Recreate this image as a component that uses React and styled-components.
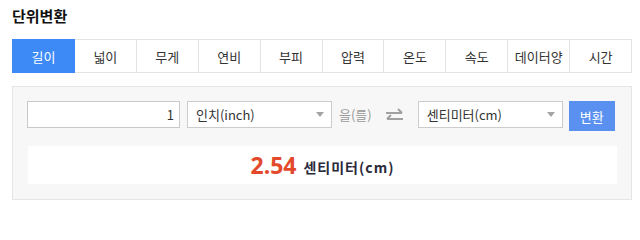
import React from "react";
import styled, { createGlobalStyle } from "styled-components";

const GlobalStyle = createGlobalStyle`
  body {
    margin: 0;
    background: #fff;
    font-family: "Noto Sans CJK KR", "Noto Sans", sans-serif;
    color: #333;
  }
`;

const Wrapper = styled.div`
  width: 620px;
  padding: 5px 8px 0 12px;
`;

const Title = styled.h2`
  margin: 0 0 12px;
  font-size: 15px;
  line-height: 22px;
  font-weight: 700;
  color: #111;
`;

const Tabs = styled.ul`
  display: flex;
  margin: 0 0 13px;
  padding: 0;
  list-style: none;
`;

const Tab = styled.li`
  flex: 1;
  height: 32px;
  display: flex;
  align-items: center;
  justify-content: center;
  font-size: 13px;
  border: 1px solid ${(p) => (p.$active ? "#3d8af7" : "#e3e3e3")};
  margin-left: -1px;
  background: ${(p) => (p.$active ? "#3d8af7" : "#fff")};
  color: ${(p) => (p.$active ? "#fff" : "#333")};
  position: relative;
  z-index: ${(p) => (p.$active ? 1 : 0)};
  &:first-child {
    margin-left: 0;
  }
`;

const Panel = styled.div`
  border: 1px solid #e5e5e5;
  background: #f7f7f7;
  padding: 14px 14px 15px 14px;
`;

const Row = styled.div`
  display: flex;
  align-items: flex-start;
  margin-bottom: 15px;
`;

const NumberInput = styled.input`
  box-sizing: border-box;
  width: 153px;
  height: 27px;
  margin: 0 7px 0 0;
  padding: 0 5px;
  border: 1px solid #c9c9c9;
  background: #fff;
  text-align: right;
  font-family: inherit;
  font-size: 13px;
  color: #333;
  outline: none;
`;

const Select = styled.div`
  box-sizing: border-box;
  width: 145px;
  height: 27px;
  display: flex;
  align-items: center;
  justify-content: space-between;
  padding: 0 7px 0 8px;
  border: 1px solid #cccccc;
  background: #fff;
  font-size: 13px;
  color: #333;
  &::after {
    content: "";
    border-left: 4px solid transparent;
    border-right: 4px solid transparent;
    border-top: 5px solid #a5a5a5;
  }
`;

const Particle = styled.span`
  margin: 0 14px 0 7px;
  line-height: 27px;
  font-size: 13px;
  color: #999;
`;

const SwapIcon = styled.svg`
  margin: 7px 15px 0 0;
  flex: none;
`;

const ConvertButton = styled.button`
  width: 46px;
  height: 30px;
  margin-left: 6px;
  border: 0;
  padding: 0;
  background: #5a91f0;
  color: #fff;
  font-family: inherit;
  font-size: 13px;
`;

const Result = styled.div`
  height: 38px;
  margin: 0 0 0 1px;
  background: #fff;
  display: flex;
  align-items: center;
  justify-content: center;
  gap: 7px;
`;

const Value = styled.strong`
  font-family: "Noto Sans", sans-serif;
  font-size: 23px;
  font-weight: 700;
  color: #e24a2b;
`;

const Unit = styled.span`
  margin-top: 3px;
  font-size: 14px;
  font-weight: 700;
  letter-spacing: 1px;
  color: #2a2a3a;
`;

const tabs = ["길이", "넓이", "무게", "연비", "부피", "압력", "온도", "속도", "데이터양", "시간"];

export default function App() {
  return (
    <Wrapper>
      <GlobalStyle />
      <Title>단위변환</Title>
      <Tabs>
        {tabs.map((t, i) => (
          <Tab key={t} $active={i === 0}>
            {t}
          </Tab>
        ))}
      </Tabs>
      <Panel>
        <Row>
          <NumberInput defaultValue="1" />
          <Select>인치(inch)</Select>
          <Particle>을(를)</Particle>
          <SwapIcon width="17" height="13" viewBox="0 0 17 13">
            <path d="M0 5h16M16 5l-4-4M1 11h16M1 11l4-4" stroke="#a0a0a0" strokeWidth="2" fill="none" />
          </SwapIcon>
          <Select>센티미터(cm)</Select>
          <ConvertButton>변환</ConvertButton>
        </Row>
        <Result>
          <Value>2.54</Value>
          <Unit>센티미터(cm)</Unit>
        </Result>
      </Panel>
    </Wrapper>
  );
}
